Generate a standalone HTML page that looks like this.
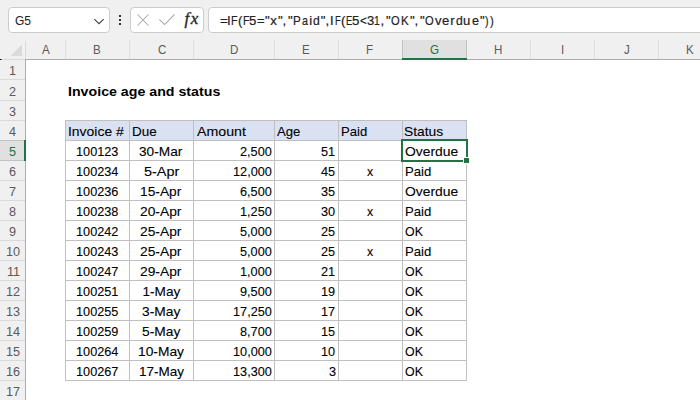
<!DOCTYPE html><html><head><meta charset="utf-8"><style>
html,body{margin:0;padding:0;}
html{overflow:hidden;width:700px;height:400px;background:#fff;}
body{width:700px;height:400px;overflow:hidden;position:relative;background:#fff;font-family:"Liberation Sans",sans-serif;}
div{position:absolute;box-sizing:border-box;}
svg{position:absolute;}
.t{white-space:nowrap;line-height:normal;transform-origin:0 0;-webkit-text-stroke:0.1px currentColor;}
</style></head><body>
<div style="left:0px;top:0px;width:700px;height:40px;background:#f0f0f0;"></div>
<div style="left:8px;top:7px;width:102px;height:26px;background:#fff;border:1px solid #cdcdcd;border-radius:4px"></div>
<div style="left:130px;top:7px;width:74px;height:26px;background:#fff;border:1px solid #cdcdcd;border-radius:4px"></div>
<div style="left:208px;top:7px;width:600px;height:26px;background:#fff;border:1px solid #cdcdcd;border-radius:4px"></div>
<div style="left:119px;top:15px;width:2px;height:2px;background:#333;"></div>
<div style="left:119px;top:19px;width:2px;height:2px;background:#333;"></div>
<div style="left:119px;top:23px;width:2px;height:2px;background:#333;"></div>
<svg style="left:0;top:0" width="700" height="40"><path d="M94.3 19.1 L99 23.6 L103.7 19.1" fill="none" stroke="#454545" stroke-width="1.15"/><path d="M137.5 14.5 L148.5 25.5 M148.5 14.5 L137.5 25.5" stroke="#a6a6a6" stroke-width="1.05" fill="none"/><path d="M159.3 19.3 L164.5 24.5 L174.6 14.4" stroke="#a6a6a6" stroke-width="1.05" fill="none"/></svg>
<div class="t" style="left:184.5px;top:9px;letter-spacing:1.6px;font-family:'Liberation Serif',serif;font-style:italic;font-size:17px;color:#262626;-webkit-text-stroke:0.35px currentColor">fx</div>
<div style="left:0px;top:40px;width:700px;height:20px;background:#f0f0f0;"></div>
<div style="left:402px;top:40px;width:65px;height:19px;background:#e0e0e0;"></div>
<div style="left:65px;top:40px;width:1px;height:19px;background:#dedede;"></div>
<div style="left:129px;top:40px;width:1px;height:19px;background:#dedede;"></div>
<div style="left:193px;top:40px;width:1px;height:19px;background:#dedede;"></div>
<div style="left:274px;top:40px;width:1px;height:19px;background:#dedede;"></div>
<div style="left:338px;top:40px;width:1px;height:19px;background:#dedede;"></div>
<div style="left:402px;top:40px;width:1px;height:19px;background:#c2c2c2;"></div>
<div style="left:466px;top:40px;width:1px;height:19px;background:#c2c2c2;"></div>
<div style="left:530px;top:40px;width:1px;height:19px;background:#dedede;"></div>
<div style="left:594px;top:40px;width:1px;height:19px;background:#dedede;"></div>
<div style="left:658px;top:40px;width:1px;height:19px;background:#dedede;"></div>
<div style="left:25px;top:41px;width:1px;height:18px;background:#dadada;"></div>
<div style="left:0px;top:59px;width:25px;height:1px;background:#dadada;"></div>
<div style="left:25px;top:59px;width:675px;height:1px;background:#acacac;"></div>
<div style="left:402px;top:58px;width:65px;height:2px;background:#217346;"></div>
<svg style="left:0;top:40px" width="25" height="19"><path d="M22 4.5 L22 16 L10.5 16 Z" fill="#dadada"/></svg>
<div style="left:0px;top:59px;width:1px;height:1px;background:#000;"></div>
<div style="left:1px;top:59px;width:1px;height:1px;background:#777;"></div>
<div style="left:0px;top:60px;width:25px;height:340px;background:#f0f0f0;"></div>
<div style="left:0px;top:141px;width:25px;height:19px;background:#e0e0e0;"></div>
<div style="left:0px;top:79px;width:25px;height:1px;background:#dadada;"></div>
<div style="left:0px;top:100px;width:25px;height:1px;background:#dadada;"></div>
<div style="left:0px;top:120px;width:25px;height:1px;background:#dadada;"></div>
<div style="left:0px;top:140px;width:25px;height:1px;background:#c2c2c2;"></div>
<div style="left:0px;top:160px;width:25px;height:1px;background:#c2c2c2;"></div>
<div style="left:0px;top:180px;width:25px;height:1px;background:#dadada;"></div>
<div style="left:0px;top:200px;width:25px;height:1px;background:#dadada;"></div>
<div style="left:0px;top:220px;width:25px;height:1px;background:#dadada;"></div>
<div style="left:0px;top:240px;width:25px;height:1px;background:#dadada;"></div>
<div style="left:0px;top:260px;width:25px;height:1px;background:#dadada;"></div>
<div style="left:0px;top:280px;width:25px;height:1px;background:#dadada;"></div>
<div style="left:0px;top:300px;width:25px;height:1px;background:#dadada;"></div>
<div style="left:0px;top:320px;width:25px;height:1px;background:#dadada;"></div>
<div style="left:0px;top:340px;width:25px;height:1px;background:#dadada;"></div>
<div style="left:0px;top:360px;width:25px;height:1px;background:#dadada;"></div>
<div style="left:0px;top:380px;width:25px;height:1px;background:#dadada;"></div>
<div style="left:25px;top:59px;width:1px;height:341px;background:#acacac;"></div>
<div style="left:24px;top:140px;width:2px;height:21px;background:#217346;"></div>
<div style="left:65px;top:120px;width:402px;height:20px;background:#d9e1f2;"></div>
<div style="left:65px;top:120px;width:402px;height:1px;background:#bfbfbf;"></div>
<div style="left:65px;top:140px;width:402px;height:1px;background:#bfbfbf;"></div>
<div style="left:65px;top:160px;width:402px;height:1px;background:#bfbfbf;"></div>
<div style="left:65px;top:180px;width:402px;height:1px;background:#bfbfbf;"></div>
<div style="left:65px;top:200px;width:402px;height:1px;background:#bfbfbf;"></div>
<div style="left:65px;top:220px;width:402px;height:1px;background:#bfbfbf;"></div>
<div style="left:65px;top:240px;width:402px;height:1px;background:#bfbfbf;"></div>
<div style="left:65px;top:260px;width:402px;height:1px;background:#bfbfbf;"></div>
<div style="left:65px;top:280px;width:402px;height:1px;background:#bfbfbf;"></div>
<div style="left:65px;top:300px;width:402px;height:1px;background:#bfbfbf;"></div>
<div style="left:65px;top:320px;width:402px;height:1px;background:#bfbfbf;"></div>
<div style="left:65px;top:340px;width:402px;height:1px;background:#bfbfbf;"></div>
<div style="left:65px;top:360px;width:402px;height:1px;background:#bfbfbf;"></div>
<div style="left:65px;top:380px;width:402px;height:1px;background:#bfbfbf;"></div>
<div style="left:65px;top:120px;width:1px;height:261px;background:#bfbfbf;"></div>
<div style="left:129px;top:120px;width:1px;height:261px;background:#bfbfbf;"></div>
<div style="left:193px;top:120px;width:1px;height:261px;background:#bfbfbf;"></div>
<div style="left:274px;top:120px;width:1px;height:261px;background:#bfbfbf;"></div>
<div style="left:338px;top:120px;width:1px;height:261px;background:#bfbfbf;"></div>
<div style="left:402px;top:120px;width:1px;height:261px;background:#bfbfbf;"></div>
<div style="left:466px;top:120px;width:1px;height:261px;background:#bfbfbf;"></div>
<div class="t" style="left:15.40px;top:13.50px;font-size:12.6px;font-weight:normal;color:#222;transform:scaleX(0.9500);-webkit-text-stroke:0.05px currentColor">G5</div>
<div class="t" style="left:41.92px;top:43.00px;font-size:12.6px;font-weight:normal;color:#5a5a5a;transform:scaleX(0.9200);-webkit-text-stroke:0px currentColor">A</div>
<div class="t" style="left:93.46px;top:43.00px;font-size:12.6px;font-weight:normal;color:#5a5a5a;transform:scaleX(0.9200);-webkit-text-stroke:0px currentColor">B</div>
<div class="t" style="left:157.92px;top:43.00px;font-size:12.6px;font-weight:normal;color:#5a5a5a;transform:scaleX(0.9200);-webkit-text-stroke:0px currentColor">C</div>
<div class="t" style="left:229.50px;top:43.00px;font-size:12.6px;font-weight:normal;color:#5a5a5a;transform:scaleX(0.9200);-webkit-text-stroke:0px currentColor">D</div>
<div class="t" style="left:302.46px;top:43.00px;font-size:12.6px;font-weight:normal;color:#5a5a5a;transform:scaleX(0.9200);-webkit-text-stroke:0px currentColor">E</div>
<div class="t" style="left:366.46px;top:43.00px;font-size:12.6px;font-weight:normal;color:#5a5a5a;transform:scaleX(0.9200);-webkit-text-stroke:0px currentColor">F</div>
<div class="t" style="left:430.46px;top:43.00px;font-size:12.6px;font-weight:normal;color:#217346;transform:scaleX(0.9200);-webkit-text-stroke:0px currentColor">G</div>
<div class="t" style="left:494.46px;top:43.00px;font-size:12.6px;font-weight:normal;color:#5a5a5a;transform:scaleX(0.9200);-webkit-text-stroke:0px currentColor">H</div>
<div class="t" style="left:560.76px;top:43.00px;font-size:12.6px;font-weight:normal;color:#5a5a5a;transform:scaleX(0.9200);-webkit-text-stroke:0px currentColor">I</div>
<div class="t" style="left:623.84px;top:43.00px;font-size:12.6px;font-weight:normal;color:#5a5a5a;transform:scaleX(0.9200);-webkit-text-stroke:0px currentColor">J</div>
<div class="t" style="left:686.46px;top:43.00px;font-size:12.6px;font-weight:normal;color:#5a5a5a;transform:scaleX(0.9200);-webkit-text-stroke:0px currentColor">K</div>
<div class="t" style="left:8.86px;top:63.00px;font-size:13.2px;font-weight:normal;color:#5a5a5a;transform:scaleX(0.9600);-webkit-text-stroke:0px currentColor">1</div>
<div class="t" style="left:9.34px;top:84.00px;font-size:13.2px;font-weight:normal;color:#5a5a5a;transform:scaleX(0.9600);-webkit-text-stroke:0px currentColor">2</div>
<div class="t" style="left:8.86px;top:104.00px;font-size:13.2px;font-weight:normal;color:#5a5a5a;transform:scaleX(0.9600);-webkit-text-stroke:0px currentColor">3</div>
<div class="t" style="left:9.34px;top:124.00px;font-size:13.2px;font-weight:normal;color:#5a5a5a;transform:scaleX(0.9600);-webkit-text-stroke:0px currentColor">4</div>
<div class="t" style="left:8.86px;top:144.00px;font-size:13.2px;font-weight:normal;color:#217346;transform:scaleX(0.9600);-webkit-text-stroke:0px currentColor">5</div>
<div class="t" style="left:9.34px;top:164.00px;font-size:13.2px;font-weight:normal;color:#5a5a5a;transform:scaleX(0.9600);-webkit-text-stroke:0px currentColor">6</div>
<div class="t" style="left:9.34px;top:184.00px;font-size:13.2px;font-weight:normal;color:#5a5a5a;transform:scaleX(0.9600);-webkit-text-stroke:0px currentColor">7</div>
<div class="t" style="left:9.34px;top:204.00px;font-size:13.2px;font-weight:normal;color:#5a5a5a;transform:scaleX(0.9600);-webkit-text-stroke:0px currentColor">8</div>
<div class="t" style="left:8.86px;top:224.00px;font-size:13.2px;font-weight:normal;color:#5a5a5a;transform:scaleX(0.9600);-webkit-text-stroke:0px currentColor">9</div>
<div class="t" style="left:6.20px;top:244.00px;font-size:13.2px;font-weight:normal;color:#5a5a5a;transform:scaleX(0.9600);-webkit-text-stroke:0px currentColor">10</div>
<div class="t" style="left:6.68px;top:264.00px;font-size:13.2px;font-weight:normal;color:#5a5a5a;transform:scaleX(0.9600);-webkit-text-stroke:0px currentColor">11</div>
<div class="t" style="left:6.20px;top:284.00px;font-size:13.2px;font-weight:normal;color:#5a5a5a;transform:scaleX(0.9600);-webkit-text-stroke:0px currentColor">12</div>
<div class="t" style="left:6.20px;top:304.00px;font-size:13.2px;font-weight:normal;color:#5a5a5a;transform:scaleX(0.9600);-webkit-text-stroke:0px currentColor">13</div>
<div class="t" style="left:5.72px;top:324.00px;font-size:13.2px;font-weight:normal;color:#5a5a5a;transform:scaleX(0.9600);-webkit-text-stroke:0px currentColor">14</div>
<div class="t" style="left:6.20px;top:344.00px;font-size:13.2px;font-weight:normal;color:#5a5a5a;transform:scaleX(0.9600);-webkit-text-stroke:0px currentColor">15</div>
<div class="t" style="left:6.20px;top:364.00px;font-size:13.2px;font-weight:normal;color:#5a5a5a;transform:scaleX(0.9600);-webkit-text-stroke:0px currentColor">16</div>
<div class="t" style="left:6.20px;top:384.00px;font-size:13.2px;font-weight:normal;color:#5a5a5a;transform:scaleX(0.9600);-webkit-text-stroke:0px currentColor">17</div>
<div class="t" style="left:68.16px;top:84.00px;font-size:13.6px;font-weight:bold;color:#000;transform:scaleX(1.0444);-webkit-text-stroke:0px currentColor">Invoice age and status</div>
<div class="t" style="left:67.98px;top:124.00px;font-size:13.6px;font-weight:normal;color:#000;transform:scaleX(1.0245)">Invoice #</div>
<div class="t" style="left:131.51px;top:124.00px;font-size:13.6px;font-weight:normal;color:#000;transform:scaleX(0.9917)">Due</div>
<div class="t" style="left:196.50px;top:124.00px;font-size:13.6px;font-weight:normal;color:#000;transform:scaleX(1.0426)">Amount</div>
<div class="t" style="left:277.00px;top:124.00px;font-size:13.6px;font-weight:normal;color:#000;transform:scaleX(0.9667)">Age</div>
<div class="t" style="left:341.04px;top:124.00px;font-size:13.6px;font-weight:normal;color:#000;transform:scaleX(0.9615)">Paid</div>
<div class="t" style="left:404.18px;top:124.00px;font-size:13.6px;font-weight:normal;color:#000;transform:scaleX(1.0162)">Status</div>
<div class="t" style="left:76.26px;top:144.00px;font-size:13.6px;font-weight:normal;color:#000;transform:scaleX(0.9345)">100123</div>
<div class="t" style="left:139.49px;top:144.00px;font-size:13.6px;font-weight:normal;color:#000;transform:scaleX(1.0071)">30-Mar</div>
<div class="t" style="left:239.63px;top:144.00px;font-size:13.6px;font-weight:normal;color:#000;transform:scaleX(0.9345)">2,500</div>
<div class="t" style="left:321.48px;top:144.00px;font-size:13.6px;font-weight:normal;color:#000;transform:scaleX(0.9345)">51</div>
<div class="t" style="left:405.00px;top:144.00px;font-size:13.6px;font-weight:normal;color:#000;transform:scaleX(1.0192)">Overdue</div>
<div class="t" style="left:76.26px;top:164.00px;font-size:13.6px;font-weight:normal;color:#000;transform:scaleX(0.9345)">100234</div>
<div class="t" style="left:143.94px;top:164.00px;font-size:13.6px;font-weight:normal;color:#000;transform:scaleX(1.0625)">5-Apr</div>
<div class="t" style="left:233.09px;top:164.00px;font-size:13.6px;font-weight:normal;color:#000;transform:scaleX(0.9345)">12,000</div>
<div class="t" style="left:321.48px;top:164.00px;font-size:13.6px;font-weight:normal;color:#000;transform:scaleX(0.9345)">45</div>
<div class="t" style="left:367.00px;top:164.00px;font-size:13.6px;font-weight:normal;color:#000;transform:scaleX(0.9000)">x</div>
<div class="t" style="left:404.83px;top:164.00px;font-size:13.6px;font-weight:normal;color:#000;transform:scaleX(0.9692)">Paid</div>
<div class="t" style="left:76.26px;top:184.00px;font-size:13.6px;font-weight:normal;color:#000;transform:scaleX(0.9345)">100236</div>
<div class="t" style="left:140.49px;top:184.00px;font-size:13.6px;font-weight:normal;color:#000;transform:scaleX(1.0125)">15-Apr</div>
<div class="t" style="left:239.63px;top:184.00px;font-size:13.6px;font-weight:normal;color:#000;transform:scaleX(0.9345)">6,500</div>
<div class="t" style="left:321.48px;top:184.00px;font-size:13.6px;font-weight:normal;color:#000;transform:scaleX(0.9345)">35</div>
<div class="t" style="left:405.00px;top:184.00px;font-size:13.6px;font-weight:normal;color:#000;transform:scaleX(1.0192)">Overdue</div>
<div class="t" style="left:76.26px;top:204.00px;font-size:13.6px;font-weight:normal;color:#000;transform:scaleX(0.9345)">100238</div>
<div class="t" style="left:140.38px;top:204.00px;font-size:13.6px;font-weight:normal;color:#000;transform:scaleX(1.0151)">20-Apr</div>
<div class="t" style="left:239.63px;top:204.00px;font-size:13.6px;font-weight:normal;color:#000;transform:scaleX(0.9345)">1,250</div>
<div class="t" style="left:321.48px;top:204.00px;font-size:13.6px;font-weight:normal;color:#000;transform:scaleX(0.9345)">30</div>
<div class="t" style="left:367.00px;top:204.00px;font-size:13.6px;font-weight:normal;color:#000;transform:scaleX(0.9000)">x</div>
<div class="t" style="left:404.83px;top:204.00px;font-size:13.6px;font-weight:normal;color:#000;transform:scaleX(0.9692)">Paid</div>
<div class="t" style="left:76.26px;top:224.00px;font-size:13.6px;font-weight:normal;color:#000;transform:scaleX(0.9345)">100242</div>
<div class="t" style="left:140.38px;top:224.00px;font-size:13.6px;font-weight:normal;color:#000;transform:scaleX(1.0151)">25-Apr</div>
<div class="t" style="left:239.63px;top:224.00px;font-size:13.6px;font-weight:normal;color:#000;transform:scaleX(0.9345)">5,000</div>
<div class="t" style="left:321.48px;top:224.00px;font-size:13.6px;font-weight:normal;color:#000;transform:scaleX(0.9345)">25</div>
<div class="t" style="left:405.00px;top:224.00px;font-size:13.6px;font-weight:normal;color:#000;transform:scaleX(0.9105)">OK</div>
<div class="t" style="left:76.26px;top:244.00px;font-size:13.6px;font-weight:normal;color:#000;transform:scaleX(0.9345)">100243</div>
<div class="t" style="left:140.38px;top:244.00px;font-size:13.6px;font-weight:normal;color:#000;transform:scaleX(1.0151)">25-Apr</div>
<div class="t" style="left:239.63px;top:244.00px;font-size:13.6px;font-weight:normal;color:#000;transform:scaleX(0.9345)">5,000</div>
<div class="t" style="left:321.48px;top:244.00px;font-size:13.6px;font-weight:normal;color:#000;transform:scaleX(0.9345)">25</div>
<div class="t" style="left:367.00px;top:244.00px;font-size:13.6px;font-weight:normal;color:#000;transform:scaleX(0.9000)">x</div>
<div class="t" style="left:404.83px;top:244.00px;font-size:13.6px;font-weight:normal;color:#000;transform:scaleX(0.9692)">Paid</div>
<div class="t" style="left:76.26px;top:264.00px;font-size:13.6px;font-weight:normal;color:#000;transform:scaleX(0.9345)">100247</div>
<div class="t" style="left:140.38px;top:264.00px;font-size:13.6px;font-weight:normal;color:#000;transform:scaleX(1.0151)">29-Apr</div>
<div class="t" style="left:239.63px;top:264.00px;font-size:13.6px;font-weight:normal;color:#000;transform:scaleX(0.9345)">1,000</div>
<div class="t" style="left:321.48px;top:264.00px;font-size:13.6px;font-weight:normal;color:#000;transform:scaleX(0.9345)">21</div>
<div class="t" style="left:405.00px;top:264.00px;font-size:13.6px;font-weight:normal;color:#000;transform:scaleX(0.9105)">OK</div>
<div class="t" style="left:76.26px;top:284.00px;font-size:13.6px;font-weight:normal;color:#000;transform:scaleX(0.9345)">100251</div>
<div class="t" style="left:142.50px;top:284.00px;font-size:13.6px;font-weight:normal;color:#000;transform:scaleX(1.0000)">1-May</div>
<div class="t" style="left:239.63px;top:284.00px;font-size:13.6px;font-weight:normal;color:#000;transform:scaleX(0.9345)">9,500</div>
<div class="t" style="left:321.48px;top:284.00px;font-size:13.6px;font-weight:normal;color:#000;transform:scaleX(0.9345)">19</div>
<div class="t" style="left:405.00px;top:284.00px;font-size:13.6px;font-weight:normal;color:#000;transform:scaleX(0.9105)">OK</div>
<div class="t" style="left:76.26px;top:304.00px;font-size:13.6px;font-weight:normal;color:#000;transform:scaleX(0.9345)">100255</div>
<div class="t" style="left:141.91px;top:304.00px;font-size:13.6px;font-weight:normal;color:#000;transform:scaleX(1.0151)">3-May</div>
<div class="t" style="left:233.09px;top:304.00px;font-size:13.6px;font-weight:normal;color:#000;transform:scaleX(0.9345)">17,250</div>
<div class="t" style="left:321.48px;top:304.00px;font-size:13.6px;font-weight:normal;color:#000;transform:scaleX(0.9345)">17</div>
<div class="t" style="left:405.00px;top:304.00px;font-size:13.6px;font-weight:normal;color:#000;transform:scaleX(0.9105)">OK</div>
<div class="t" style="left:76.26px;top:324.00px;font-size:13.6px;font-weight:normal;color:#000;transform:scaleX(0.9345)">100259</div>
<div class="t" style="left:141.91px;top:324.00px;font-size:13.6px;font-weight:normal;color:#000;transform:scaleX(1.0151)">5-May</div>
<div class="t" style="left:239.63px;top:324.00px;font-size:13.6px;font-weight:normal;color:#000;transform:scaleX(0.9345)">8,700</div>
<div class="t" style="left:321.48px;top:324.00px;font-size:13.6px;font-weight:normal;color:#000;transform:scaleX(0.9345)">15</div>
<div class="t" style="left:405.00px;top:324.00px;font-size:13.6px;font-weight:normal;color:#000;transform:scaleX(0.9105)">OK</div>
<div class="t" style="left:76.26px;top:344.00px;font-size:13.6px;font-weight:normal;color:#000;transform:scaleX(0.9345)">100264</div>
<div class="t" style="left:138.35px;top:344.00px;font-size:13.6px;font-weight:normal;color:#000;transform:scaleX(1.0151)">10-May</div>
<div class="t" style="left:233.09px;top:344.00px;font-size:13.6px;font-weight:normal;color:#000;transform:scaleX(0.9345)">10,000</div>
<div class="t" style="left:321.48px;top:344.00px;font-size:13.6px;font-weight:normal;color:#000;transform:scaleX(0.9345)">10</div>
<div class="t" style="left:405.00px;top:344.00px;font-size:13.6px;font-weight:normal;color:#000;transform:scaleX(0.9105)">OK</div>
<div class="t" style="left:76.26px;top:364.00px;font-size:13.6px;font-weight:normal;color:#000;transform:scaleX(0.9345)">100267</div>
<div class="t" style="left:138.81px;top:364.00px;font-size:13.6px;font-weight:normal;color:#000;transform:scaleX(0.9932)">17-May</div>
<div class="t" style="left:233.09px;top:364.00px;font-size:13.6px;font-weight:normal;color:#000;transform:scaleX(0.9345)">13,300</div>
<div class="t" style="left:328.96px;top:364.00px;font-size:13.6px;font-weight:normal;color:#000;transform:scaleX(0.9345)">3</div>
<div class="t" style="left:405.00px;top:364.00px;font-size:13.6px;font-weight:normal;color:#000;transform:scaleX(0.9105)">OK</div>
<div class="t" style="left:220.00px;top:12.50px;font-size:13.2px;color:#222;transform:scaleX(1.000);-webkit-text-stroke:0.2px currentColor">=</div>
<div class="t" style="left:226.88px;top:12.50px;font-size:13.2px;color:#222;transform:scaleX(1.000);-webkit-text-stroke:0.2px currentColor">I</div>
<div class="t" style="left:230.84px;top:12.50px;font-size:13.2px;color:#222;transform:scaleX(0.814);-webkit-text-stroke:0.2px currentColor">F</div>
<div class="t" style="left:237.88px;top:12.50px;font-size:13.2px;color:#222;transform:scaleX(1.000);-webkit-text-stroke:0.2px currentColor">(</div>
<div class="t" style="left:242.84px;top:12.50px;font-size:13.2px;color:#222;transform:scaleX(0.814);-webkit-text-stroke:0.2px currentColor">F</div>
<div class="t" style="left:249.00px;top:12.50px;font-size:13.2px;color:#222;transform:scaleX(1.000);-webkit-text-stroke:0.2px currentColor">5</div>
<div class="t" style="left:257.15px;top:12.50px;font-size:13.2px;color:#222;transform:scaleX(0.993);-webkit-text-stroke:0.2px currentColor">=</div>
<div class="t" style="left:264.88px;top:12.50px;font-size:13.2px;color:#222;transform:scaleX(1.000);-webkit-text-stroke:0.2px currentColor">&quot;</div>
<div class="t" style="left:270.25px;top:12.50px;font-size:13.2px;color:#222;transform:scaleX(1.000);-webkit-text-stroke:0.2px currentColor">x</div>
<div class="t" style="left:277.88px;top:12.50px;font-size:13.2px;color:#222;transform:scaleX(1.000);-webkit-text-stroke:0.2px currentColor">&quot;</div>
<div class="t" style="left:282.62px;top:12.50px;font-size:13.2px;color:#222;transform:scaleX(1.000);-webkit-text-stroke:0.2px currentColor">,</div>
<div class="t" style="left:288.12px;top:12.50px;font-size:13.2px;color:#222;transform:scaleX(1.000);-webkit-text-stroke:0.2px currentColor">&quot;</div>
<div class="t" style="left:292.76px;top:12.50px;font-size:13.2px;color:#222;transform:scaleX(0.886);-webkit-text-stroke:0.2px currentColor">P</div>
<div class="t" style="left:301.65px;top:12.50px;font-size:13.2px;color:#222;transform:scaleX(0.814);-webkit-text-stroke:0.2px currentColor">a</div>
<div class="t" style="left:309.25px;top:12.50px;font-size:13.2px;color:#222;transform:scaleX(1.000);-webkit-text-stroke:0.2px currentColor">i</div>
<div class="t" style="left:312.65px;top:12.50px;font-size:13.2px;color:#222;transform:scaleX(0.921);-webkit-text-stroke:0.2px currentColor">d</div>
<div class="t" style="left:320.75px;top:12.50px;font-size:13.2px;color:#222;transform:scaleX(1.000);-webkit-text-stroke:0.2px currentColor">&quot;</div>
<div class="t" style="left:325.62px;top:12.50px;font-size:13.2px;color:#222;transform:scaleX(1.000);-webkit-text-stroke:0.2px currentColor">,</div>
<div class="t" style="left:330.18px;top:12.50px;font-size:13.2px;color:#222;transform:scaleX(0.975);-webkit-text-stroke:0.2px currentColor">I</div>
<div class="t" style="left:334.94px;top:12.50px;font-size:13.2px;color:#222;transform:scaleX(0.707);-webkit-text-stroke:0.2px currentColor">F</div>
<div class="t" style="left:341.12px;top:12.50px;font-size:13.2px;color:#222;transform:scaleX(1.000);-webkit-text-stroke:0.2px currentColor">(</div>
<div class="t" style="left:346.19px;top:12.50px;font-size:13.2px;color:#222;transform:scaleX(0.713);-webkit-text-stroke:0.2px currentColor">E</div>
<div class="t" style="left:351.88px;top:12.50px;font-size:13.2px;color:#222;transform:scaleX(1.000);-webkit-text-stroke:0.2px currentColor">5</div>
<div class="t" style="left:359.90px;top:12.50px;font-size:13.2px;color:#222;transform:scaleX(0.886);-webkit-text-stroke:0.2px currentColor">&lt;</div>
<div class="t" style="left:366.66px;top:12.50px;font-size:13.2px;color:#222;transform:scaleX(0.992);-webkit-text-stroke:0.2px currentColor">3</div>
<div class="t" style="left:373.87px;top:12.50px;font-size:13.2px;color:#222;transform:scaleX(0.783);-webkit-text-stroke:0.2px currentColor">1</div>
<div class="t" style="left:380.38px;top:12.50px;font-size:13.2px;color:#222;transform:scaleX(1.000);-webkit-text-stroke:0.2px currentColor">,</div>
<div class="t" style="left:386.00px;top:12.50px;font-size:13.2px;color:#222;transform:scaleX(1.000);-webkit-text-stroke:0.2px currentColor">&quot;</div>
<div class="t" style="left:391.40px;top:12.50px;font-size:13.2px;color:#222;transform:scaleX(0.845);-webkit-text-stroke:0.2px currentColor">O</div>
<div class="t" style="left:400.78px;top:12.50px;font-size:13.2px;color:#222;transform:scaleX(0.869);-webkit-text-stroke:0.2px currentColor">K</div>
<div class="t" style="left:410.00px;top:12.50px;font-size:13.2px;color:#222;transform:scaleX(1.000);-webkit-text-stroke:0.2px currentColor">&quot;</div>
<div class="t" style="left:414.62px;top:12.50px;font-size:13.2px;color:#222;transform:scaleX(1.000);-webkit-text-stroke:0.2px currentColor">,</div>
<div class="t" style="left:420.00px;top:12.50px;font-size:13.2px;color:#222;transform:scaleX(1.000);-webkit-text-stroke:0.2px currentColor">&quot;</div>
<div class="t" style="left:425.40px;top:12.50px;font-size:13.2px;color:#222;transform:scaleX(0.845);-webkit-text-stroke:0.2px currentColor">O</div>
<div class="t" style="left:434.90px;top:12.50px;font-size:13.2px;color:#222;transform:scaleX(0.993);-webkit-text-stroke:0.2px currentColor">v</div>
<div class="t" style="left:442.15px;top:12.50px;font-size:13.2px;color:#222;transform:scaleX(0.993);-webkit-text-stroke:0.2px currentColor">e</div>
<div class="t" style="left:450.25px;top:12.50px;font-size:13.2px;color:#222;transform:scaleX(1.000);-webkit-text-stroke:0.2px currentColor">r</div>
<div class="t" style="left:455.90px;top:12.50px;font-size:13.2px;color:#222;transform:scaleX(0.921);-webkit-text-stroke:0.2px currentColor">d</div>
<div class="t" style="left:463.41px;top:12.50px;font-size:13.2px;color:#222;transform:scaleX(0.992);-webkit-text-stroke:0.2px currentColor">u</div>
<div class="t" style="left:471.65px;top:12.50px;font-size:13.2px;color:#222;transform:scaleX(0.957);-webkit-text-stroke:0.2px currentColor">e</div>
<div class="t" style="left:479.88px;top:12.50px;font-size:13.2px;color:#222;transform:scaleX(1.000);-webkit-text-stroke:0.2px currentColor">&quot;</div>
<div class="t" style="left:485.40px;top:12.50px;font-size:13.2px;color:#222;transform:scaleX(0.800);-webkit-text-stroke:0.2px currentColor">)</div>
<div class="t" style="left:490.40px;top:12.50px;font-size:13.2px;color:#222;transform:scaleX(0.863);-webkit-text-stroke:0.2px currentColor">)</div>
<div style="left:401px;top:139px;width:67px;height:23px;background:transparent;border:2px solid #217346"></div>
<div style="left:463px;top:157px;width:7px;height:7px;background:#fff;"></div>
<div style="left:464px;top:158px;width:5px;height:5px;background:#217346;"></div>
</body></html>
